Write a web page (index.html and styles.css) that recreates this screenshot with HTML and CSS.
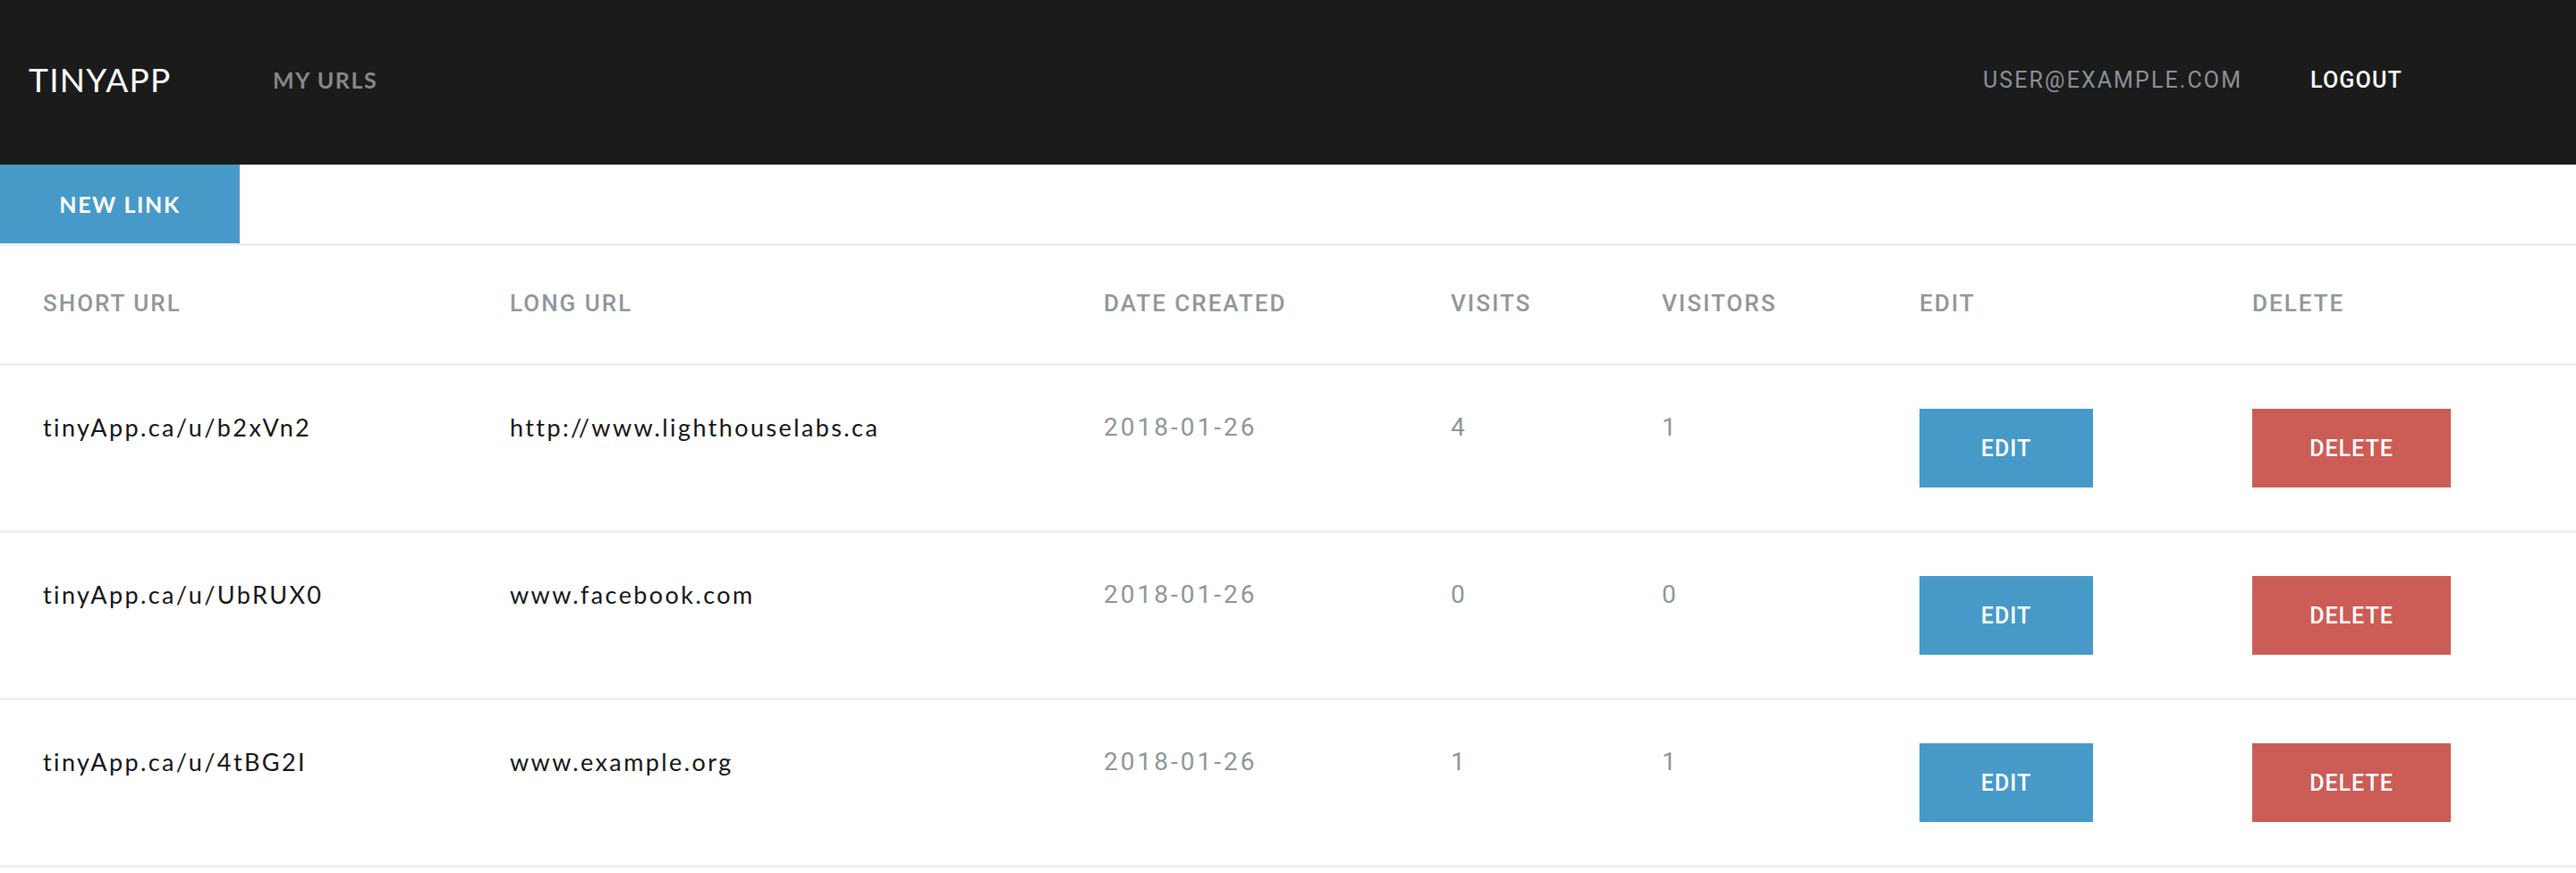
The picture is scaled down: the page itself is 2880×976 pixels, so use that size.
FILE: index.html
```html
<!DOCTYPE html>
<html>
<head>
<meta charset="utf-8">
<title>TinyApp</title>
<link rel="stylesheet" href="styles.css">
</head>
<body>
<header class="topbar">
  <div class="brand-group">
    <a class="brand">TINYAPP</a>
    <a class="nav-link">MY URLS</a>
  </div>
  <div class="user-group">
    <span class="user-email">USER@EXAMPLE.COM</span>
    <a class="logout">LOGOUT</a>
  </div>
</header>
<div class="toolbar">
  <a class="btn-new">NEW LINK</a>
</div>
<section class="url-table">
  <div class="row head">
    <div class="cell">SHORT URL</div>
    <div class="cell">LONG URL</div>
    <div class="cell">DATE CREATED</div>
    <div class="cell">VISITS</div>
    <div class="cell">VISITORS</div>
    <div class="cell">EDIT</div>
    <div class="cell">DELETE</div>
  </div>
  <div class="row data">
    <div class="cell dark">tinyApp.ca/u/b2xVn2</div>
    <div class="cell dark">http://www.lighthouselabs.ca</div>
    <div class="cell muted">2018-01-26</div>
    <div class="cell muted">4</div>
    <div class="cell muted">1</div>
    <div class="cell"><a class="btn btn-edit">EDIT</a></div>
    <div class="cell"><a class="btn btn-delete">DELETE</a></div>
  </div>
  <div class="row data">
    <div class="cell dark">tinyApp.ca/u/UbRUX0</div>
    <div class="cell dark">www.facebook.com</div>
    <div class="cell muted">2018-01-26</div>
    <div class="cell muted">0</div>
    <div class="cell muted">0</div>
    <div class="cell"><a class="btn btn-edit">EDIT</a></div>
    <div class="cell"><a class="btn btn-delete">DELETE</a></div>
  </div>
  <div class="row data">
    <div class="cell dark">tinyApp.ca/u/4tBG2I</div>
    <div class="cell dark">www.example.org</div>
    <div class="cell muted">2018-01-26</div>
    <div class="cell muted">1</div>
    <div class="cell muted">1</div>
    <div class="cell"><a class="btn btn-edit">EDIT</a></div>
    <div class="cell"><a class="btn btn-delete">DELETE</a></div>
  </div>
</section>
</body>
</html>
```
FILE: styles.css
```css
* { box-sizing: border-box; }
html, body { margin: 0; padding: 0; background: #fff; }
body { font-family: Lato, "Noto Sans", sans-serif; color: #111; overflow: hidden; }

.topbar {
  height: 184px;
  background: #1b1b1b;
  display: flex;
  align-items: center;
  justify-content: space-between;
  padding: 0 194px 0 32px;
}
.brand-group { display: flex; align-items: center; }
.brand {
  font-family: Lato, sans-serif;
  font-size: 37px;
  font-weight: 400;
  color: #fff;
  letter-spacing: 1.3px;
  width: 273px;
  margin-top: -8px;
}
.nav-link {
  font-family: Lato, sans-serif;
  font-size: 25px;
  font-weight: 700;
  color: #888;
  letter-spacing: 1.6px;
  margin-top: -6px;
}
.user-group { display: flex; align-items: center; margin-top: -6px; }
.user-email {
  font-family: Roboto, sans-serif;
  font-size: 25px;
  color: #8c9298;
  letter-spacing: 2.1px;
  width: 366px;
}
.logout {
  font-family: Roboto, sans-serif;
  font-size: 25px;
  font-weight: 500;
  color: #fff;
  letter-spacing: 1.2px;
}

.toolbar { height: 88px; display: flex; }
.btn-new {
  width: 268px;
  height: 88px;
  background: #479ac8;
  color: #fff;
  font-family: Lato, sans-serif;
  font-size: 25px;
  font-weight: 700;
  letter-spacing: 1.6px;
  display: flex;
  align-items: center;
  justify-content: center;
}

.url-table { border-top: 3px solid #f0f0f0; }
.row {
  display: grid;
  grid-template-columns: 522px 664px 388px 236px 288px 372px 1fr;
  padding-left: 48px;
  border-bottom: 3px solid #f0f0f0;
}
.row.head {
  height: 134px;
  align-items: center;
  font-family: Roboto, sans-serif;
  font-size: 26px;
  font-weight: 500;
  color: #8f979b;
  letter-spacing: 2px;
}
.row.head .cell { margin-top: -4px; }
.row.data { height: 187px; align-items: start; }
.cell.dark, .cell.muted {
  font-family: Lato, sans-serif;
  font-size: 27px;
  letter-spacing: 2.4px;
  line-height: 32px;
  padding-top: 53px;
}
.cell.dark { color: #151515; }
.cell.muted { color: #8d969a; font-family: Roboto, sans-serif; font-size: 28px; letter-spacing: 3px; }

.btn {
  display: flex;
  align-items: center;
  justify-content: center;
  height: 88px;
  margin-top: 48px;
  color: #fff;
  font-family: Roboto, sans-serif;
  font-size: 25px;
  font-weight: 500;
  letter-spacing: 1px;
}
.btn-edit { width: 194px; background: #479ac8; }
.btn-delete { width: 222px; background: #cc5c56; }
```
